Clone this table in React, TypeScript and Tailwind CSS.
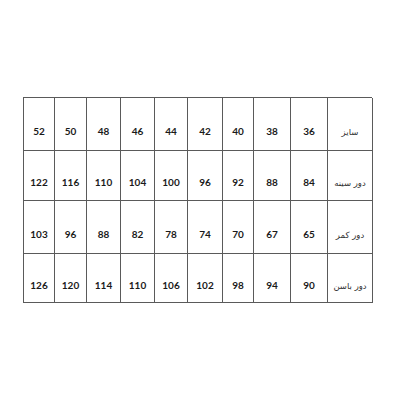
import { Fragment } from "react";

const rows: { label: string; values: string[] }[] = [
  { label: "سایز", values: ["52", "50", "48", "46", "44", "42", "40", "38", "36"] },
  { label: "دور سینه", values: ["122", "116", "110", "104", "100", "96", "92", "88", "84"] },
  { label: "دور کمر", values: ["103", "96", "88", "82", "78", "74", "70", "67", "65"] },
  { label: "دور باسن", values: ["126", "120", "114", "110", "106", "102", "98", "94", "90"] },
];

export default function App() {
  return (
    <div className="w-[400px] h-[400px] bg-white pt-[97px] pl-[23px]">
      <div className="grid w-[349px] grid-cols-[31px_32px_34px_34px_33px_35px_31px_37px_37px_45px] grid-rows-[53px_50px_53px_49px] border-t border-l border-[#5a5a5a]">
        {rows.map((row) => (
          <Fragment key={row.label}>
            {row.values.map((v, i) => (
              <div
                key={i}
                className="flex items-center justify-center pt-[14px] border-r border-b border-[#5a5a5a] text-[10px] font-bold text-[#1a1a1a] font-['Lato','Liberation_Sans',sans-serif]"
              >
                {v}
              </div>
            ))}
            <div
              dir="rtl"
              className="flex items-center justify-center pt-[16px] border-r border-b border-[#5a5a5a] text-[8.5px] text-[#333] font-['DejaVu_Sans',sans-serif]"
            >
              {row.label}
            </div>
          </Fragment>
        ))}
      </div>
    </div>
  );
}
